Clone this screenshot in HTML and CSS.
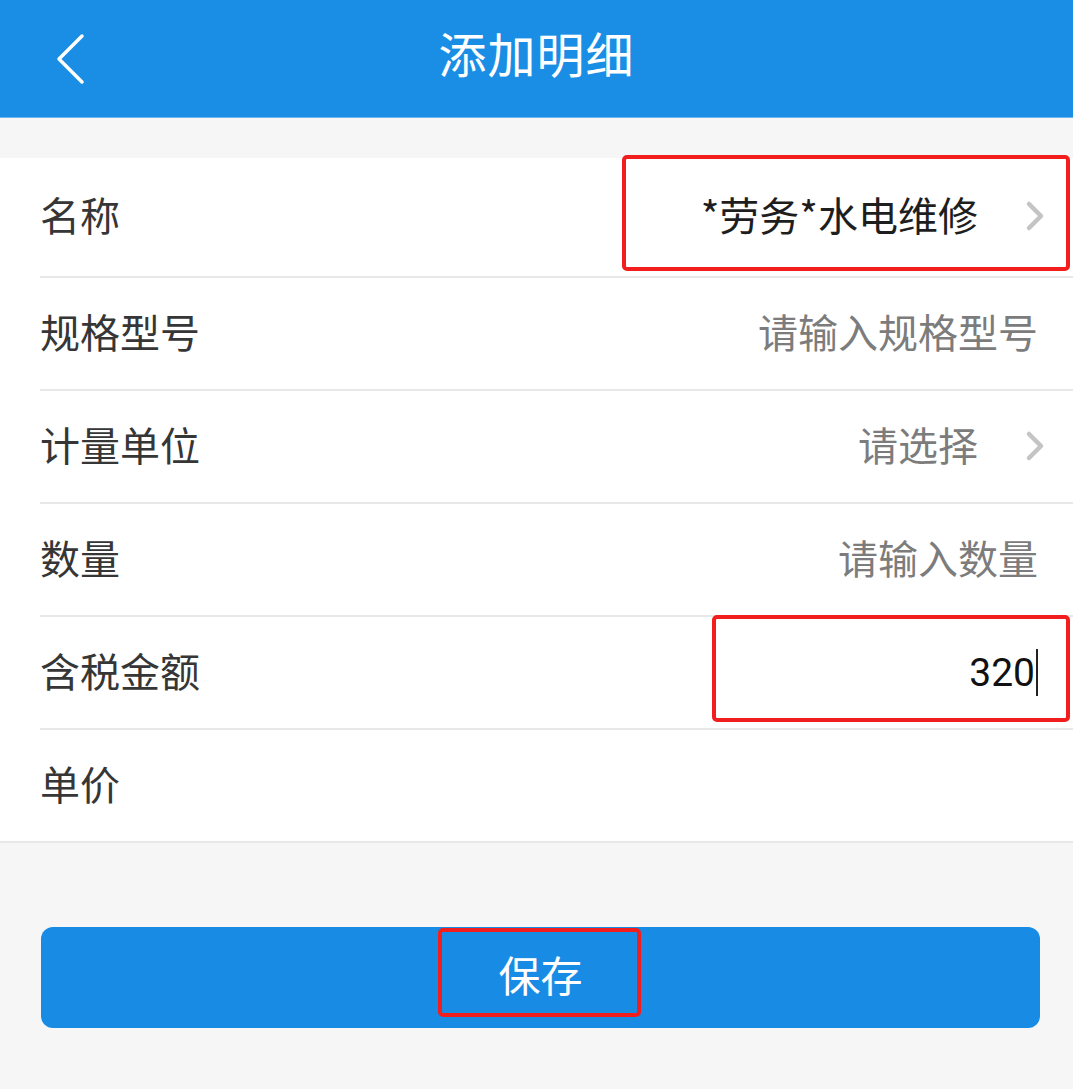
FILE: index.html
```html
<!DOCTYPE html>
<html lang="zh-CN">

<head>
    <meta charset="UTF-8">
    <title>添加明细</title>
    <link rel="stylesheet" href="styles.css">
</head>

<body>
    <div class="header">
        <span class="back">
            <svg width="32" height="52" viewBox="0 0 32 52">
                <path d="M28 3 L5 26 L28 49" fill="none" stroke="#fff" stroke-width="3.5" stroke-linecap="round" stroke-linejoin="round" />
            </svg>
        </span>
        <h1 class="title">添加明细</h1>
    </div>
    <div class="gap"></div>
    <div class="list">
        <div class="row row-first">
            <div class="row-inner">
                <span class="label">名称</span>
                <span class="value">*劳务*水电维修<i class="arrow"><svg width="22" height="32" viewBox="0 0 22 32"><path d="M5 4 L17 16 L5 28" fill="none" stroke="#c4c4c4" stroke-width="4.5" stroke-linecap="round" stroke-linejoin="round" /></svg></i></span>
            </div>
            <div class="mark mark-name"></div>
        </div>
        <div class="row">
            <div class="row-inner">
                <span class="label">规格型号</span>
                <span class="value placeholder">请输入规格型号</span>
            </div>
        </div>
        <div class="row">
            <div class="row-inner">
                <span class="label">计量单位</span>
                <span class="value placeholder">请选择<i class="arrow"><svg width="22" height="32" viewBox="0 0 22 32"><path d="M5 4 L17 16 L5 28" fill="none" stroke="#c4c4c4" stroke-width="4.5" stroke-linecap="round" stroke-linejoin="round" /></svg></i></span>
            </div>
        </div>
        <div class="row">
            <div class="row-inner">
                <span class="label">数量</span>
                <span class="value placeholder">请输入数量</span>
            </div>
        </div>
        <div class="row">
            <div class="row-inner">
                <span class="label">含税金额</span>
                <span class="value number">320<i class="caret"></i></span>
            </div>
            <div class="mark mark-amount"></div>
        </div>
        <div class="row row-last">
            <div class="row-inner">
                <span class="label">单价</span>
                <span class="value"></span>
            </div>
        </div>
    </div>
    <div class="actions">
        <button class="save">保存</button>
        <div class="mark mark-save"></div>
    </div>
</body>

</html>
```

FILE: styles.css
```css
html,
body {
    margin: 0;
    padding: 0;
}

body {
    width: 1073px;
    min-height: 1089px;
    background-color: #f6f6f6;
    font-family: "Noto Sans CJK SC", "Noto Sans", sans-serif;
    color: #333;
}

.header {
    height: 117px;
    background-color: #1a8ee4;
    border-bottom: 1px solid #6cb6f0;
    display: flex;
    align-items: center;
    justify-content: center;
    position: relative;
}

.back {
    position: absolute;
    left: 54px;
    top: 33px;
    display: block;
}

.title {
    margin: 0;
    color: #fff;
    font-size: 48px;
    font-weight: normal;
    letter-spacing: 1px;
    margin-top: -14px;
}

.gap {
    height: 40px;
}

.list {
    background-color: #fff;
    border-bottom: 2px solid #e8e8e8;
}

.row {
    padding-left: 40px;
    position: relative;
}

.row-inner {
    height: 111px;
    border-bottom: 2px solid #e8e8e8;
    display: flex;
    align-items: center;
    justify-content: space-between;
    padding-right: 35px;
}

.row-first .row-inner {
    height: 118px;
}

.row-last .row-inner {
    border-bottom: none;
}

.label {
    font-size: 40px;
    color: #363636;
    margin-top: -6px;
}

.value {
    font-size: 40px;
    color: #1e1e1e;
    display: flex;
    align-items: center;
    margin-top: -6px;
}

.placeholder {
    color: #7c7c7c;
}

.arrow {
    display: block;
    margin-left: 46px;
    margin-right: -8px;
    margin-top: 4px;
}

.arrow svg {
    display: block;
}

.number {
    font-family: Roboto, "Noto Sans", sans-serif;
    font-size: 39px;
    color: #111;
    margin-top: 0;
}

.caret {
    display: block;
    width: 2px;
    height: 47px;
    background-color: #222;
    margin-left: 1px;
}

.mark {
    position: absolute;
    border: 4px solid #f21d1d;
    border-radius: 5px;
    box-sizing: border-box;
}

.mark-name {
    top: -3px;
    right: 3px;
    width: 448px;
    height: 116px;
}

.mark-amount {
    top: -2px;
    right: 3px;
    width: 358px;
    height: 107px;
}

.actions {
    padding: 84px 33px 61px 41px;
    position: relative;
}

.save {
    display: block;
    width: 999px;
    height: 101px;
    border: none;
    border-radius: 12px;
    background-color: #188ce5;
    color: #fff;
    font-family: "Noto Sans CJK SC", "Noto Sans", sans-serif;
    font-size: 42px;
    padding-bottom: 10px;
}

.mark-save {
    top: 85px;
    left: 438px;
    width: 203px;
    height: 89px;
}
```
